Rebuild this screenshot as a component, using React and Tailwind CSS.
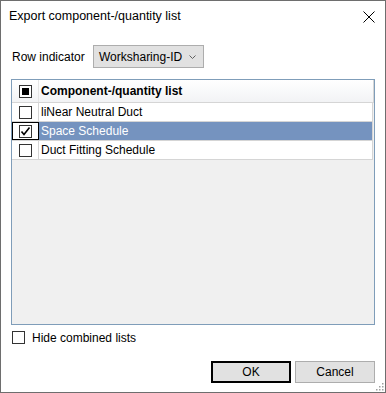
const rows = [
  { name: "liNear Neutral Duct", checked: false, selected: false },
  { name: "Space Schedule", checked: true, selected: true },
  { name: "Duct Fitting Schedule", checked: false, selected: false },
];

const Check = ({ checked }) => (
  <div className="w-[13px] h-[13px] border border-[#333333] bg-white flex items-center justify-center">
    {checked && (
      <svg width="11" height="11" viewBox="0 0 11 11">
        <path d="M1.5 5.5 L4 8.5 L9.5 1.5" fill="none" stroke="#000" strokeWidth="1.6" />
      </svg>
    )}
  </div>
);

const ExportDialog = () => {
  return (
    <div
      className="relative w-[386px] h-[393px] border border-[#6e6e6e] bg-white flex flex-col text-[12px] text-black"
      style={{ fontFamily: '"Liberation Sans", Arial, sans-serif' }}
    >
      {/* title bar */}
      <div className="h-[31px] flex items-center justify-between pl-[8px] pr-[10px]">
        <span className="text-[12.5px]">Export component-/quantity list</span>
        <svg width="12" height="12" viewBox="0 0 12 12">
          <path d="M0.5 0.5 L11.5 11.5 M11.5 0.5 L0.5 11.5" stroke="#000" strokeWidth="1" />
        </svg>
      </div>

      <div className="px-[10px] flex flex-col">
        <div className="mt-[13px] flex items-center">
          <span className="w-[82px] pl-[1px]">Row indicator</span>
          <div className="h-[23px] w-[111px] border border-[#adadad] bg-[#e1e1e1] flex items-center justify-between pl-[5px] pr-[7px]">
            <span>Worksharing-ID</span>
            <svg width="7" height="4" viewBox="0 0 7 4">
              <path d="M0.5 0.5 L3.5 3.5 L6.5 0.5" fill="none" stroke="#606060" strokeWidth="1" />
            </svg>
          </div>
        </div>

        <div className="mt-[11px] h-[246px] border border-[#7f9db9] bg-[#f0f0f0] flex flex-col">
          <div className="h-[23px] flex border-b border-[#d5d5d5] bg-gradient-to-b from-white to-[#f2f3f5] border-r">
            <div className="w-[27px] border-r border-[#e5e5e5] flex items-center justify-center">
              <div className="w-[13px] h-[13px] border border-[#333333] bg-white flex items-center justify-center">
                <div className="w-[7px] h-[7px] bg-black" />
              </div>
            </div>
            <div className="flex items-center pl-[2px] font-bold">Component-/quantity list</div>
          </div>
          {rows.map((r) => (
            <div
              key={r.name}
              className={`h-[19px] flex border-b border-r border-[#d5d5d5] mr-[1px] ${r.selected ? "bg-[#7593bf]" : "bg-white"}`}
            >
              <div
                className={`w-[27px] flex items-center justify-center border-r border-[#d5d5d5] ${r.selected ? "bg-white outline outline-1 outline-black -outline-offset-1" : ""}`}
              >
                <Check checked={r.checked} />
              </div>
              <div className={`flex items-center pl-[2px] ${r.selected ? "text-white" : ""}`}>{r.name}</div>
            </div>
          ))}
        </div>

        <div className="mt-[6px] h-[13px] flex items-center gap-[7px] pl-[1px] leading-none">
          <Check checked={false} />
          <span>Hide combined lists</span>
        </div>

        <div className="mt-[17px] flex justify-end gap-[4px]">
          <button className="w-[80px] h-[22px] border-2 border-black bg-[#e1e1e1]">OK</button>
          <button className="w-[80px] h-[22px] border border-[#adadad] bg-[#e1e1e1]">Cancel</button>
        </div>
      </div>

      {/* resize grip */}
      <svg className="absolute right-[1px] bottom-[1px]" width="10" height="10" viewBox="0 0 10 10">
        {[[8, 2], [8, 5], [5, 5], [8, 8], [5, 8], [2, 8]].map(([x, y], i) => (
          <rect key={i} x={x} y={y} width="1.5" height="1.5" fill="#a0a0a0" />
        ))}
      </svg>
    </div>
  );
};

export default function App() {
  return <ExportDialog />;
}
